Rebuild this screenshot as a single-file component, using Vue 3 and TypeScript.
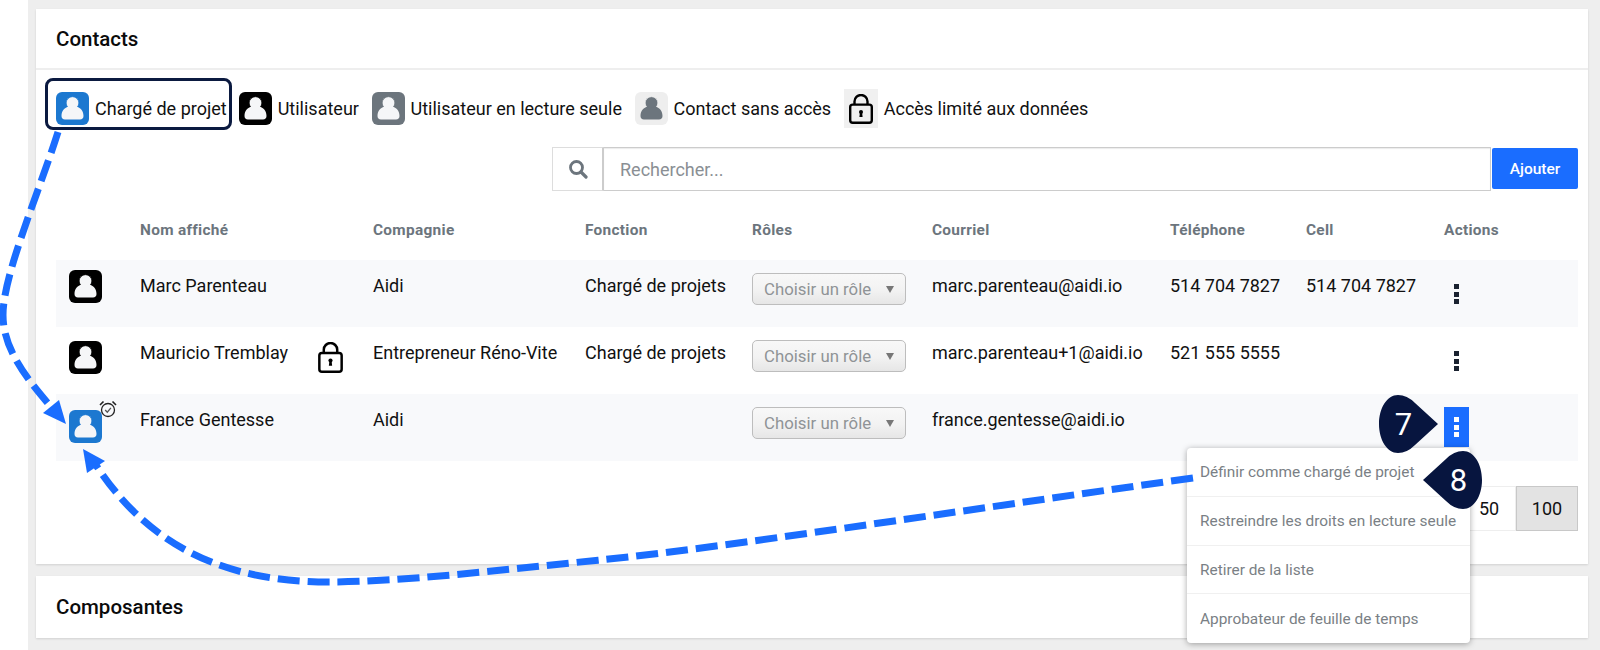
<script setup lang="ts">
interface Row {
  kind: string
  name: string
  lock?: boolean
  clock?: boolean
  company: string
  role: string
  mail: string
  phone: string
  cell: string
  active?: boolean
}
const legend = [
  { kind: 'blue', label: 'Chargé de projet', selected: true },
  { kind: 'black', label: 'Utilisateur', selected: false },
  { kind: 'gray', label: 'Utilisateur en lecture seule', selected: false },
  { kind: 'light', label: 'Contact sans accès', selected: false },
]
const heads = ['Nom affiché', 'Compagnie', 'Fonction', 'Rôles', 'Courriel', 'Téléphone', 'Cell', 'Actions']
const rows: Row[] = [
  { kind: 'black', name: 'Marc Parenteau', company: 'Aidi', role: 'Chargé de projets', mail: 'marc.parenteau@aidi.io', phone: '514 704 7827', cell: '514 704 7827' },
  { kind: 'black', name: 'Mauricio Tremblay', lock: true, company: 'Entrepreneur Réno-Vite', role: 'Chargé de projets', mail: 'marc.parenteau+1@aidi.io', phone: '521 555 5555', cell: '' },
  { kind: 'blue', name: 'France Gentesse', clock: true, company: 'Aidi', role: '', mail: 'france.gentesse@aidi.io', phone: '', cell: '', active: true },
]
const menu = ['Définir comme chargé de projet', 'Restreindre les droits en lecture seule', 'Retirer de la liste', 'Approbateur de feuille de temps']
const body = 'M5.5 24c0-5.500 3.500-8.500 7-9.500 2.400 1.400 5.600 1.400 8 0 3.500 1 7 4 7 9.500 0 2.200-1.300 3.500-3.500 3.500H9c-2.200 0-3.500-1.300-3.500-3.500z'
</script>

<template>
  <div class="page">
    <main class="content">
      <section class="card contacts">
        <h2 class="title head">Contacts</h2>
        <div class="legend">
          <div v-for="l in legend" :key="l.label" class="leg" :class="{ selected: l.selected }">
            <span class="avatar" :class="l.kind">
              <svg viewBox="0 0 33 33"><circle cx="16.5" cy="11" r="6.300" /><path :d="body" /></svg>
            </span>
            <span>{{ l.label }}</span>
          </div>
          <div class="leg">
            <span class="lockbox">
              <svg class="lock" viewBox="0 0 24 30"><path d="M5.500 11V7.500a6.500 6.500 0 0 1 13 0V11" fill="none" stroke="#000" stroke-width="2.400" /><rect x="1.200" y="10.600" width="21.600" height="18.200" rx="2.500" fill="none" stroke="#000" stroke-width="2.400" /><circle cx="12" cy="18" r="2" /><path d="M11 18h2l.6 5h-3.200z" /></svg>
            </span>
            <span>Accès limité aux données</span>
          </div>
        </div>
        <div class="search">
          <span class="addon">
            <svg viewBox="0 0 20 20" width="20" height="20"><circle cx="8.500" cy="8.500" r="6" fill="none" stroke="#6c757d" stroke-width="2.800" /><path d="M13 13l5 5" stroke="#6c757d" stroke-width="3.200" stroke-linecap="round" /></svg>
          </span>
          <div class="input">Rechercher...</div>
          <button class="add" type="button">Ajouter</button>
        </div>
        <div class="table">
          <div class="grid header">
            <span></span>
            <span v-for="h in heads" :key="h">{{ h }}</span>
          </div>
          <div v-for="(r, i) in rows" :key="r.name" class="grid row" :class="[`row-${i + 1}`, { odd: i % 2 === 0 }]">
            <span class="cell-icon">
              <span class="avatar" :class="r.kind">
                <svg viewBox="0 0 33 33"><circle cx="16.5" cy="11" r="6.300" /><path :d="body" /></svg>
              </span>
              <svg v-if="r.clock" class="clock" viewBox="0 0 18 18"><circle cx="9" cy="10" r="6.500" fill="none" stroke="#222" stroke-width="1.300" /><path d="M6.200 10l2.100 2.200 3.600-4.400" fill="none" stroke="#555" stroke-width="1.300" /><path d="M1 5l3.500-3.500M17 5l-3.500-3.500" stroke="#222" stroke-width="1.600" /></svg>
            </span>
            <span class="namecell">
              <span>{{ r.name }}</span>
              <svg v-if="r.lock" class="lock rowlock" viewBox="0 0 24 30"><path d="M5.500 11V7.500a6.500 6.500 0 0 1 13 0V11" fill="none" stroke="#000" stroke-width="2.400" /><rect x="1.200" y="10.600" width="21.600" height="18.200" rx="2.500" fill="none" stroke="#000" stroke-width="2.400" /><circle cx="12" cy="18" r="2" /><path d="M11 18h2l.6 5h-3.200z" /></svg>
            </span>
            <span>{{ r.company }}</span>
            <span>{{ r.role }}</span>
            <span><span class="select">Choisir un rôle<i class="caret"></i></span></span>
            <span>{{ r.mail }}</span>
            <span>{{ r.phone }}</span>
            <span>{{ r.cell }}</span>
            <span class="actions">
              <span class="dots" :class="{ active: r.active }"><i></i><i></i><i></i></span>
            </span>
          </div>
        </div>
        <div class="pager">
          <span class="page-btn">50</span>
          <span class="page-btn current">100</span>
        </div>
        <ul class="menu">
          <li v-for="m in menu" :key="m">{{ m }}</li>
        </ul>
      </section>
      <section class="card"><h2 class="title composantes">Composantes</h2></section>
    </main>

    <svg class="overlay" width="1600" height="650" viewBox="0 0 1600 650">
      <g fill="none" stroke="#1a6dff" stroke-width="7" stroke-dasharray="22 8">
        <path d="M58 132C38 195 3 275 3 315C3 350 28 380 52 408" />
        <path d="M1193 478C950 512 720 548 600 560C500 570 400 582 329 582C230 582 150 550 94 462" />
      </g>
      <path d="M66 424L43 413L59 400Z" fill="#1a6dff" />
      <path d="M83 449L87 473L105 461Z" fill="#1a6dff" />
    </svg>

    <div class="bubble b7">
      <svg viewBox="0 0 59 58"><path d="M59 29L36 8Q28 0 19 0C8 0 0 13 0 29C0 45 8 58 19 58Q28 58 36 50Z" /></svg>
      <span>7</span>
    </div>
    <div class="bubble b8">
      <svg viewBox="0 0 59 58"><path d="M0 29L23 8Q31 0 40 0C51 0 59 13 59 29C59 45 51 58 40 58Q31 58 23 50Z" /></svg>
      <span>8</span>
    </div>
  </div>
</template>

<style>
html, body { margin: 0; background: #fff; }
</style>

<style scoped>
.page {
  position: relative;
  width: 1600px;
  height: 650px;
  overflow: hidden;
  font-family: Roboto, "Liberation Sans", sans-serif;
  color: #111;
  background: #fff;
  padding-left: 28px;
  box-sizing: border-box;
}
.content {
  height: 650px;
  background: #eeeeee;
  padding: 9px 12px 0 8px;
  display: flex;
  flex-direction: column;
  gap: 12px;
  box-sizing: border-box;
}
.card { background: #fff; box-shadow: 0 1px 2px rgba(0, 0, 0, .12); position: relative; }
.contacts { height: 555px; box-sizing: border-box; z-index: 2; }
.title { margin: 0; font-size: 20.5px; font-weight: 500; color: #0b0b0b; line-height: 24px; }
.head { padding: 18px 20px 17px; border-bottom: 2px solid #eee; }
.composantes { padding: 19px 20px 19px; height: 24px; }
.legend { display: flex; align-items: center; gap: 12.6px; padding: 8px 0 0 9px; height: 52px; font-size: 18px; }
.leg { display: flex; align-items: center; gap: 6px; height: 52px; padding-top: 9px; box-sizing: border-box; }
.leg.selected { border: 3px solid #0b1a40; border-radius: 8px; padding: 9px 2px 0 8px; margin-right: -5.6px; }
.avatar { width: 33px; height: 33px; border-radius: 6px; display: block; flex: none; color: #000; }
.avatar svg { display: block; width: 33px; height: 33px; fill: #f5f6f8; }
.avatar svg circle { stroke: currentColor; stroke-width: .7px; }
.avatar.blue { background: #1c78d0; color: #1c78d0; }
.avatar.black { background: #000; color: #000; }
.avatar.gray { background: #6c757d; color: #6c757d; }
.avatar.light { background: #eeeeee; color: #eeeeee; }
.avatar.light svg { fill: #6c757d; }
.lockbox { width: 34px; height: 39px; background: #f0f0f0; display: flex; align-items: center; justify-content: center; }
.lock { width: 24px; height: 30px; display: block; }
.search { display: flex; margin: 17px 10px 0 516px; height: 44px; font-size: 18px; }
.addon { width: 52px; border: 1px solid #ddd; border-right: 2px solid #ccc; display: flex; align-items: center; justify-content: center; box-sizing: border-box; }
.input { flex: 1; border: 1px solid #ccc; border-left: 0; box-shadow: inset 0 1px 1px rgba(0, 0, 0, .08); color: #8a8f94; display: flex; align-items: center; padding-left: 16px; }
.add { width: 86px; height: 41px; margin: 1px 0 0 1px; border: 0; border-radius: 2px; background: #1a6dff; color: #fff; font: 500 15.5px Roboto, sans-serif; }
.table { margin: 0 10px 0 20px; }
.grid { display: grid; grid-template-columns: 84px 233px 212px 167px 180px 238px 136px 138px 1fr; }
.header { height: 69px; align-items: center; padding-top: 8px; color: #6c757d; font-size: 15.4px; font-weight: 700; letter-spacing: .3px; box-sizing: border-box; }
.row { height: 67px; font-size: 18px; line-height: 24px; padding-top: 14px; box-sizing: border-box; }
.odd { background: #f8f9fb; }
.cell-icon { position: relative; padding-left: 13px; }
.row-1 .avatar { margin-top: -4px; }
.row-3 .avatar { margin-top: 2px; }
.clock { position: absolute; left: 43px; top: -8px; width: 18px; height: 18px; }
.namecell { display: flex; gap: 30px; }
.rowlock { margin-top: 1px; width: 25px; height: 31px; flex: none; }
.select { display: inline-flex; align-items: center; justify-content: space-between; width: 154px; height: 32px; margin-top: -1px; padding: 0 11px; box-sizing: border-box; background: linear-gradient(#f8f8f8, #f2f2f2 55%, #e6e6e6); border: 1px solid #bdbdbd; border-radius: 5px; color: #8f9396; font-size: 16.8px; }
.caret { width: 0; height: 0; border-left: 4.500px solid transparent; border-right: 4.500px solid transparent; border-top: 7px solid #777; }
.actions { display: block; }
.dots { width: 25px; height: 40px; display: flex; flex-direction: column; align-items: center; justify-content: center; gap: 2.500px; }
.dots i { width: 5px; height: 5px; background: #1a2230; display: block; }
.dots.active { background: #1a6dff; margin-top: -1px; }
.dots.active i { background: #fff; }
.pager { display: flex; justify-content: flex-end; margin: 25px 10px 0 0; font-size: 18px; }
.page-btn { height: 45px; display: flex; align-items: center; justify-content: center; border: 1px solid #eee; width: 54px; box-sizing: border-box; }
.page-btn.current { width: 62px; background: #e3e3e3; border: 1px solid #c8c8c8; }
.menu { position: absolute; left: 1151px; top: 439px; width: 283px; height: 195px; margin: 0; padding: 0; list-style: none; background: #fff; border-radius: 4px; box-shadow: 0 1px 6px rgba(0, 0, 0, .35); color: #7a7f85; font-size: 15.4px; }
.menu li { height: 48.750px; box-sizing: border-box; padding: 1px 0 0 13px; display: flex; align-items: center; border-bottom: 1px solid #f0f0f0; }
.menu li:last-child { border-bottom: 0; }
.overlay { position: absolute; left: 0; top: 0; z-index: 3; pointer-events: none; }
.bubble { position: absolute; z-index: 4; width: 59px; height: 58px; display: flex; align-items: center; justify-content: center; color: #fff; font-size: 31px; box-sizing: border-box; }
.bubble svg { position: absolute; inset: 0; fill: #07153f; }
.bubble span { position: relative; }
.b7 { left: 1379px; top: 395px; padding-right: 10px; }
.b8 { left: 1423px; top: 451px; padding-left: 12px; }
</style>
